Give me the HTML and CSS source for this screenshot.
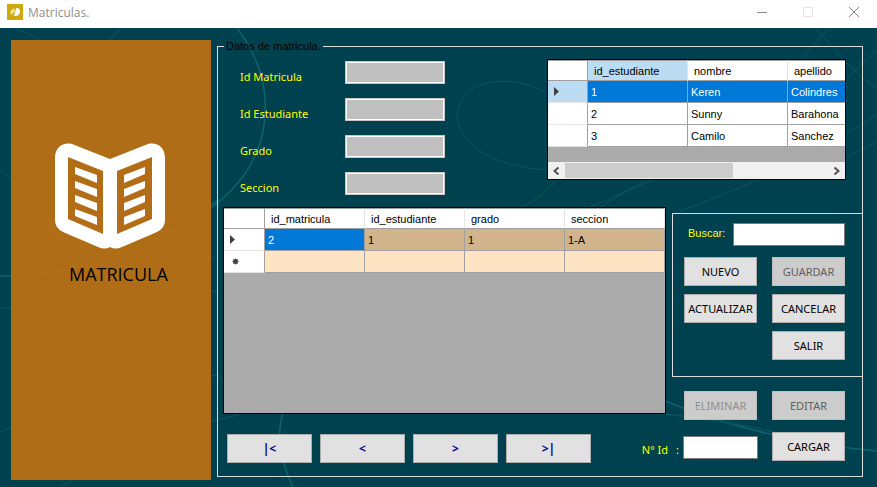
FILE: index.html
```html
<!DOCTYPE html>
<html lang="es">
<head>
<meta charset="utf-8">
<title>Matriculas.</title>
<link rel="stylesheet" href="styles.css">
</head>
<body>
<header class="titlebar">
  <svg class="app-icon" viewBox="0 0 16 16" aria-hidden="true">
    <rect width="16" height="16" fill="#cfa90c"/>
    <path d="M7 4.500C4.500 5 3 7 3.500 9.500L5 11.500C5 9 6 7 8 5.500Z" fill="#f3e6a8"/>
    <path d="M9 4C11.500 3.500 13 5 13 7.500C13 10 11 12 8.500 12L6.500 11C8 9.500 8.500 8 7.500 7C9 7 9.500 5.500 9 4Z" fill="#fff"/>
    <path d="M5.500 9L8 6.500" stroke="#fff" fill="none"/>
  </svg>
  <h1 class="title">Matriculas.</h1>
  <div class="window-buttons">
    <button class="window-button" aria-label="Minimizar"><svg viewBox="0 0 10 10"><path d="M0 5.500H10" stroke="#8c8c8c"/></svg></button>
    <button class="window-button" aria-label="Maximizar" disabled><svg viewBox="0 0 10 10"><path d="M.5.5H9.500V9.500H.5Z" stroke="#e4e4e4" fill="none"/></svg></button>
    <button class="window-button" aria-label="Cerrar"><svg viewBox="0 0 10 10"><path d="M0 0L10 10M10 0L0 10" stroke="#808080"/></svg></button>
  </div>
</header>
<main class="window">
  <svg class="backdrop" viewBox="0 28 877 459" preserveAspectRatio="xMidYMid slice" aria-hidden="true">
    <g fill="none" stroke="#0a5560" stroke-width="1">
      <path d="M14 28Q95 58 118 120Q127 140 129 155"/>
      <path d="M122 28Q40 100 32 120C-4 190 20 250 140 240"/>
      <path d="M0 170Q80 240 215 258"/>
      <path d="M0 308Q110 305 218 291"/>
      <path d="M0 432Q100 388 218 375L245 413"/>
      <path d="M60 487Q130 440 218 420L245 413"/>
      <path d="M546 92C500 70 457 83 457 118C462 150 500 167 548 170"/>
      <path d="M556 180Q545 195 522 207M652 180L590 207M645 180L600 207"/>
      <path d="M816 28Q850 70 877 89M829 28L793 68M877 50L845 80"/>
      <path d="M877 115Q770 180 680 211M877 142L845 158"/>
    </g>
    <g fill="none" stroke="#0b656b" stroke-width="1.500">
      <path d="M237 28Q268 70 265 112C264 160 235 190 211 208"/>
      <path d="M218 200Q120 276 0 276"/>
      <path d="M283 413Q273 445 293 487"/>
      <path d="M665 401Q760 440 877 451"/>
      <path d="M665 414Q760 425 800 440" stroke="#07525d"/>
    </g>
  </svg>

  <aside class="sidebar">
    <svg class="book" viewBox="0 0 112 108" aria-hidden="true">
      <path d="M1 16C1 5 9 0 18 2L56 17L94 2C103 0 111 5 111 16V78Q111 86 103 90L68 105Q61 108 56 105Q51 108 44 105L9 90Q1 86 1 78Z" fill="#fff"/>
      <g fill="#b36d17">
        <path d="M14 15L49 29V92L14 77Z"/>
        <path d="M98 15L63 29V92L98 77Z"/>
      </g>
      <g fill="#fff">
        <path d="M21 25L43 33V41L21 32ZM21 39L43 47V55L21 46ZM21 53L43 61V69L21 60ZM21 67L43 75V83L21 74Z"/>
        <path d="M91 25L70 33V41L91 32ZM91 39L70 47V55L91 46ZM91 53L70 61V69L91 60ZM91 67L70 75V83L91 74Z"/>
      </g>
    </svg>
    <h2 class="section-name">MATRICULA</h2>
  </aside>

  <fieldset class="group">
    <legend>Datos de matricula.</legend>
    <div class="top">
      <div class="fields">
        <label for="matricula">Id Matricula</label><input id="matricula" type="text" disabled>
        <label for="estudiante">Id Estudiante</label><input id="estudiante" type="text" disabled>
        <label for="grado">Grado</label><input id="grado" type="text" disabled>
        <label for="seccion">Seccion</label><input id="seccion" type="text" disabled>
      </div>
      <div class="grid students">
        <table>
          <thead><tr><th class="handle"></th><th class="active">id_estudiante</th><th>nombre</th><th>apellido</th></tr></thead>
          <tbody>
            <tr class="selected"><th class="handle active"><svg class="arrow" viewBox="0 0 5 9"><path d="M0 0L5 4.500L0 9Z"/></svg></th><td>1</td><td>Keren</td><td>Colindres</td></tr>
            <tr><th class="handle"></th><td>2</td><td>Sunny</td><td>Barahona</td></tr>
            <tr><th class="handle"></th><td>3</td><td>Camilo</td><td>Sanchez</td></tr>
          </tbody>
        </table>
        <div class="scrollbar">
          <button aria-label="Desplazar a la izquierda"><svg viewBox="0 0 7 8"><path d="M5.500.5L1.500 4L5.500 7.500"/></svg></button>
          <div class="track"><div class="thumb"></div></div>
          <button aria-label="Desplazar a la derecha"><svg viewBox="0 0 7 8"><path d="M1.500.5L5.500 4L1.500 7.500"/></svg></button>
        </div>
      </div>
    </div>

    <div class="middle">
      <div class="grid enrolments">
        <table>
          <thead><tr><th class="handle"></th><th>id_matricula</th><th>id_estudiante</th><th>grado</th><th>seccion</th></tr></thead>
          <tbody>
            <tr class="filled"><th class="handle"><svg class="arrow" viewBox="0 0 5 9"><path d="M0 0L5 4.500L0 9Z"/></svg></th><td class="current">2</td><td>1</td><td>1</td><td>1-A</td></tr>
            <tr class="blank"><th class="handle"><svg class="star" viewBox="0 0 7 7"><circle cx="3.500" cy="3.500" r="2"/><path d="M3.500.5V6.500M.5 3.500H6.500M1.300 1.300L5.700 5.700M5.700 1.300L1.300 5.700"/></svg></th><td></td><td></td><td></td><td></td></tr>
          </tbody>
        </table>
      </div>
      <div class="side">
        <section class="panel">
          <div class="search"><label for="buscar">Buscar:</label><input id="buscar" type="text"></div>
          <div class="actions">
            <button class="button">NUEVO</button>
            <button class="button" disabled>GUARDAR</button>
            <button class="button">ACTUALIZAR</button>
            <button class="button">CANCELAR</button>
            <button class="button last">SALIR</button>
          </div>
        </section>
        <div class="actions record">
          <button class="button faint" disabled>ELIMINAR</button>
          <button class="button" disabled>EDITAR</button>
        </div>
      </div>
    </div>

    <div class="bottom">
      <nav class="pager" aria-label="Registros">
        <button class="button">|&lt;</button>
        <button class="button">&lt;</button>
        <button class="button">&gt;</button>
        <button class="button">&gt;|</button>
      </nav>
      <div class="load">
        <label for="numero"><span>N° Id</span><span>:</span></label>
        <input id="numero" type="text">
        <button class="button">CARGAR</button>
      </div>
    </div>
  </fieldset>
</main>
</body>
</html>
```
FILE: styles.css
```css
* { box-sizing: border-box; }

body {
  margin: 0;
  min-height: 100vh;
  display: flex;
  flex-direction: column;
  background: #00414f;
  font-family: "Noto Sans", sans-serif;
  font-size: 11px;
}

button, input { font: inherit; margin: 0; }

.titlebar {
  display: flex;
  align-items: center;
  height: 28px;
  padding-left: 7px;
  background: #fff;
}
.app-icon { width: 16px; height: 16px; margin-bottom: 4px; }
.title {
  margin: 0 0 2px 5px;
  color: #8f8f8f;
  font-family: "Open Sans", sans-serif;
  font-size: 12px;
  font-weight: 400;
  line-height: 16px;
}
.window-buttons { display: flex; margin: 0 0 4px auto; }
.window-button {
  display: grid;
  place-items: center;
  width: 46px;
  height: 24px;
  padding: 0;
  border: 0;
  background: none;
}
.window-button svg { width: 10px; height: 10px; }

.window {
  position: relative;
  flex: 1;
  display: flex;
  gap: 6px;
  padding: 12px 14px 7px 11px;
}
.backdrop { position: absolute; inset: 0; width: 100%; height: 100%; }

.sidebar {
  position: relative;
  flex: 0 0 200px;
  display: flex;
  flex-direction: column;
  padding: 102px 0 0 43px;
  background: rgba(181, 110, 22, 0.97);
}
.book { width: 112px; height: 108px; }
.section-name {
  margin: 10px 0 0 15px;
  color: #000;
  font-family: "Open Sans", sans-serif;
  font-size: 18px;
  font-weight: 400;
  line-height: 28px;
}

.group {
  position: relative;
  flex: 1;
  min-width: 0;
  margin: 0 0 3px;
  padding: 0;
  border: 1px solid #dcdcdc;
}
.group legend {
  margin-left: 6px;
  padding: 0 2px;
  color: #000;
  font-family: "Liberation Sans", sans-serif;
  line-height: 13px;
}

.top {
  display: flex;
  justify-content: space-between;
  padding: 6px 16px 0 22px;
}
.fields {
  display: grid;
  grid-template-columns: 105px 100px;
  grid-auto-rows: 23px;
  gap: 14px 0;
  align-content: start;
  padding-top: 2px;
  color: #ff0;
}
.fields label { align-self: end; line-height: 14px; }
.fields input {
  width: 100%;
  border: 1px solid #c8c8c8;
  outline: 1px solid #fff;
  outline-offset: -2px;
  background: #c0c0c0;
}

.grid {
  border: 1px solid #000;
  background: #ababab;
  overflow: hidden;
  font-family: "Liberation Sans", sans-serif;
  color: #000;
}
.grid table {
  table-layout: fixed;
  border-collapse: separate;
  border-spacing: 0;
}
.grid th, .grid td {
  width: 100px;
  padding: 0 3px;
  border: solid #a0a0a0;
  border-width: 0 1px 1px 0;
  background: #fff;
  font-weight: 400;
  text-align: left;
  height: 22px;
  line-height: 20px;
}
.grid thead th {
  height: 21px;
  padding-left: 6px;
  border-top: 1px solid #a0a0a0;
  border-right-color: #e5e5e5;
  line-height: 18px;
}
.grid .handle { width: 40px; border-bottom-color: #e5e5e5; }
.grid thead .handle, .grid tbody .handle { border-right-color: #a0a0a0; }
.grid thead .handle { border-bottom-color: #a0a0a0; }
.grid .active { background: #bbdcf3; }
.grid .filled td { background: #d2b48c; }
.grid .blank td { background: #ffe4c4; }
.grid .selected td, .grid .filled .current { background: #0078d7; color: #fff; }
.arrow { display: block; width: 5px; height: 9px; margin-left: 3px; fill: #404040; }
.star { display: block; width: 7px; height: 7px; margin-left: 5px; fill: #404040; stroke: #404040; stroke-width: 1; }

.students {
  display: flex;
  flex-direction: column;
  width: 299px;
  height: 121px;
}
.students table { width: 340px; }
.scrollbar {
  display: flex;
  height: 17px;
  margin-top: auto;
  background: #f0f0f0;
}
.scrollbar button {
  display: grid;
  place-items: center;
  width: 17px;
  padding: 0;
  border: 0;
  background: none;
}
.scrollbar svg { width: 7px; height: 8px; fill: none; stroke: #505050; stroke-width: 2; }
.track { flex: 1; padding: 1px 0; }
.thumb { width: 64%; height: 100%; background: #cdcdcd; }

.middle {
  display: flex;
  gap: 6px;
  padding-left: 5px;
  margin-top: 12px;
}
.enrolments { flex: 1; height: 207px; }
.enrolments table { width: 100%; }
.enrolments .handle { width: 41px; }

.side { flex: 0 0 190px; padding-top: 6px; }
.panel {
  padding: 9px 17px 16px 11px;
  border: solid #dcdcdc;
  border-width: 1px 0 1px 1px;
}
.search {
  display: flex;
  justify-content: space-between;
  margin: 0 0 11px 4px;
}
.search label {
  color: #ff0;
  font-family: "Liberation Sans", sans-serif;
  line-height: 20px;
}
.search input { width: 112px; }
.search input, .load input {
  height: 23px;
  padding: 0 3px;
  border: 1px solid #7a7a7a;
  background: #fff;
}

.actions {
  display: grid;
  grid-template-columns: 73px 73px;
  grid-auto-rows: 29px;
  gap: 8px 15px;
}
.last { grid-column: 2; }
.record { margin: 14px 0 0 12px; }

.button {
  height: 29px;
  padding: 0;
  border: 1px solid #adadad;
  background: #e1e1e1;
  color: #000;
  white-space: nowrap;
}
.button:disabled { border-color: #bfbfbf; background: #ccc; color: #606060; }
.button.faint { color: #909090; }

.bottom {
  display: flex;
  justify-content: space-between;
  margin-top: 12px;
  padding: 0 17px 0 9px;
}
.pager { display: flex; gap: 8px; padding-top: 2px; }
.pager .button { width: 85px; color: #00008b; font-size: 12px; font-weight: 700; }
.load { display: flex; align-items: flex-start; }
.load label {
  display: flex;
  gap: 8px;
  margin: 10px 4px 0 0;
  color: #ff0;
  line-height: 16px;
}
.load input { width: 75px; margin: 4px 14px 0 0; }
.load .button { width: 73px; }
```
